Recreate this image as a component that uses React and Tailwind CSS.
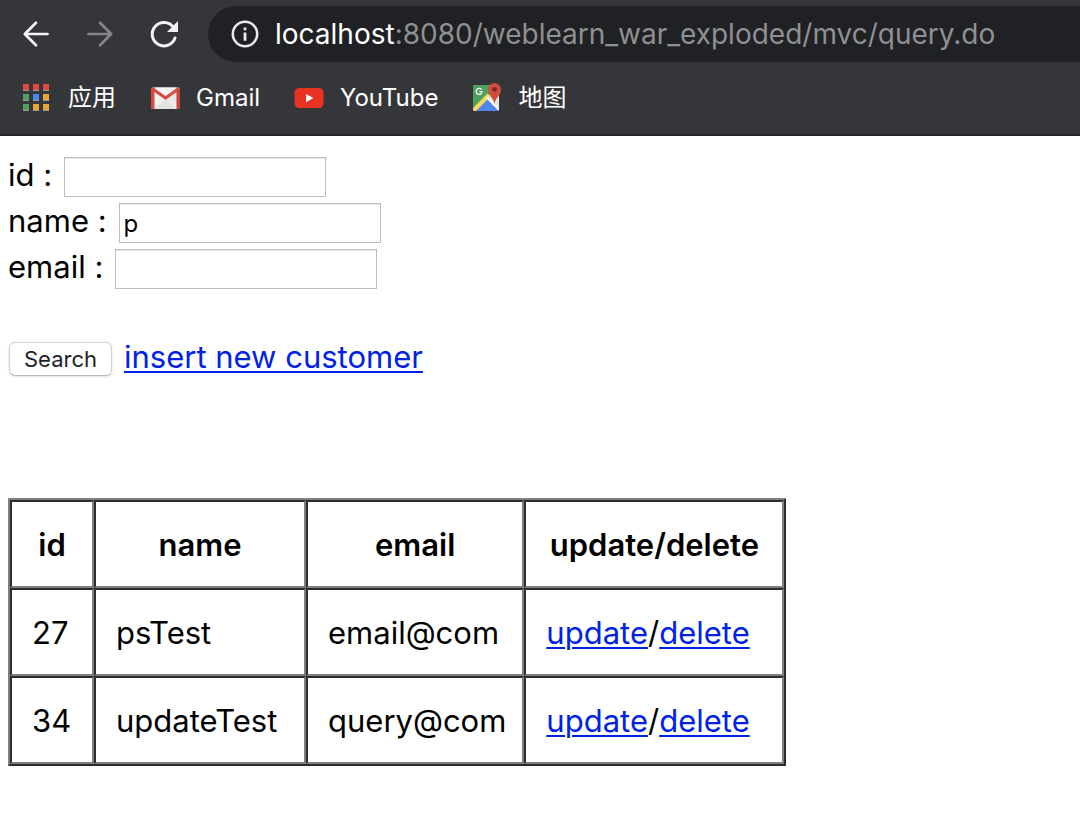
const customers = [
  { id: 27, name: 'psTest', email: 'email@com' },
  { id: 34, name: 'updateTest', email: 'query@com' },
];

const cell =
  'h-22 border-2 border-t-[#2c2c2c] border-l-[#2c2c2c] border-r-[#808080] border-b-[#808080] pt-0.5';
const link = 'text-[#0022e6] underline decoration-2 underline-offset-[3px]';

function BackIcon() {
  return (
    <svg className="size-8" viewBox="0 0 32 32" fill="none" stroke="currentColor" strokeWidth="2.7" strokeLinecap="round" strokeLinejoin="round" aria-hidden="true">
      <path d="M27.5 16H5M16 4.8L4.8 16L16 27.2" />
    </svg>
  );
}

function ForwardIcon() {
  return (
    <svg className="size-8" viewBox="0 0 32 32" fill="none" stroke="currentColor" strokeWidth="2.7" strokeLinecap="round" strokeLinejoin="round" aria-hidden="true">
      <path d="M4.5 16H27M16 4.8L27.2 16L16 27.2" />
    </svg>
  );
}

function ReloadIcon() {
  return (
    <svg className="size-8" viewBox="0 0 32 32" aria-hidden="true">
      <path d="M27 20A11.7 11.7 0 1 1 25.2 9" fill="none" stroke="currentColor" strokeWidth="3" strokeLinecap="round" />
      <path d="M30 3V14H19Z" fill="currentColor" />
    </svg>
  );
}

function InfoIcon() {
  return (
    <svg className="size-7 shrink-0" viewBox="0 0 28 28" aria-hidden="true">
      <circle cx="14" cy="14" r="12.2" fill="none" stroke="#e8eaed" strokeWidth="2.5" />
      <path d="M12.6 7.5h2.8v2.8h-2.8zM12.6 12.5h2.8v8.2h-2.8z" fill="#e8eaed" />
    </svg>
  );
}

function AppsIcon() {
  const colors = ['#e2483d', '#e2483d', '#e2483d', '#549e5f', '#468af0', '#e6a439', '#549e5f', '#e6a439', '#e6a439'];
  return (
    <svg className="h-7 w-[30px]" viewBox="0 0 30 28" aria-hidden="true">
      {colors.map((color, i) => {
        const x = 1 + (i % 3) * 10;
        const y = Math.floor(i / 3) * 10;
        return (
          <g key={i}>
            <rect x={x} y={y + 1} width="6" height="6" fill="#9a9a98" />
            <rect x={x} y={y} width="6" height="6" fill={color} />
          </g>
        );
      })}
    </svg>
  );
}

function GmailIcon() {
  return (
    <svg className="h-6 w-8" viewBox="0 0 32 24" aria-hidden="true">
      <rect x="3" y="1.5" width="29" height="21.5" rx="2" fill="#f1f1f0" />
      <path d="M6.5 23L17.5 12L28.5 23Z" fill="#e2e2e1" />
      <path d="M17.5 14L29.5 3V17Z" fill="#e6e6e5" />
      <path d="M7 1.5H28L17.5 10Z" fill="#f5f5f5" />
      <path d="M3 3.5Q3 1.5 5 1.5L6.5 2.5V23H4.7Q3 23 3 21.3Z" fill="#d54b3d" />
      <path d="M32 3.5Q32 1.5 30 1.5L28.5 2.5V23H30.3Q32 23 32 21.3Z" fill="#c94436" />
      <path d="M4.8 3L17.5 12L30.2 3" fill="none" stroke="#d54b3d" strokeWidth="3" strokeLinejoin="round" />
    </svg>
  );
}

function YouTubeIcon() {
  return (
    <svg className="h-6 w-8" viewBox="0 0 32 24" aria-hidden="true">
      <rect x="2.5" y="2" width="29" height="20" rx="4.5" fill="#ea3223" />
      <path d="M14 8L21.4 12L14 16.2Z" fill="#fff" />
    </svg>
  );
}

function MapsIcon() {
  return (
    <svg className="size-8" viewBox="0 2 32 32" aria-hidden="true">
      <clipPath id="map-sheet">
        <rect x="3" y="5" width="26" height="26" rx="2" />
      </clipPath>
      <g clipPath="url(#map-sheet)">
        <rect x="3" y="5" width="26" height="26" fill="#e4e3e3" />
        <path d="M3 5H29L3 31Z" fill="#4f9f5d" />
        <path d="M3 31L16 18L29 31Z" fill="#4e86ec" />
        <path d="M3 31L19 15" stroke="#f6d75b" strokeWidth="4.2" />
        <path d="M17 17L30 30" stroke="#f4f4f4" strokeWidth="3" />
      </g>
      <path d="M11.5 9.6A3 3 0 1 0 12.1 11.6H9.3" fill="none" stroke="#fff" strokeWidth="1.2" />
      <path d="M24.5 24.5C23.8 17.5 18 15.5 18 9.5A6.5 6.5 0 0 1 31 9.5C31 15.5 25.2 17.5 24.5 24.5Z" fill="#d44c3e" />
      <circle cx="24.5" cy="9.3" r="2.4" fill="#782c26" />
    </svg>
  );
}

function Bookmark({ icon, children }) {
  return (
    <a href="#" className="flex items-center gap-4">
      {icon}
      <span>{children}</span>
    </a>
  );
}

function Field({ name, defaultValue }) {
  return (
    <div className="flex h-[46px] items-center gap-3">
      <label htmlFor={name} className="-mt-1 whitespace-pre">
        {name} :
      </label>
      <input
        id={name}
        name={name}
        type="text"
        defaultValue={defaultValue}
        className="h-10 w-[262px] border border-[#bdbdbd] bg-white px-1 text-2xl shadow-[inset_0_1px_0_#e8e8e8] outline-none"
      />
    </div>
  );
}

export default function App() {
  return (
    <div className="min-h-screen bg-white font-['Inter','Noto_Sans_CJK_SC',sans-serif] text-black">
      <header className="overflow-hidden border-b-2 border-[#28282a] bg-[#35363a] text-white">
        <div className="flex items-center pt-1.5 pl-5">
          <nav className="flex gap-8 pr-7" aria-label="History">
            <button type="button" aria-label="Back" className="text-[#f1f3f4]"><BackIcon /></button>
            <button type="button" aria-label="Forward" className="text-[#868789]"><ForwardIcon /></button>
            <button type="button" aria-label="Reload" className="text-[#f1f3f4]"><ReloadIcon /></button>
          </nav>
          <div className="flex h-14 flex-1 items-center gap-4 rounded-l-full bg-[#202124] pl-[23px] text-[28px] whitespace-nowrap">
            <InfoIcon />
            <p className="text-[#8f9092]">
              <span className="text-white">localhost</span>:8080/weblearn_war_exploded/mvc/query.do
            </p>
          </div>
        </div>
        <nav className="flex h-18 items-center gap-8 pl-[22px] text-2xl" aria-label="Bookmarks">
          <Bookmark icon={<AppsIcon />}>应用</Bookmark>
          <Bookmark icon={<GmailIcon />}>Gmail</Bookmark>
          <Bookmark icon={<YouTubeIcon />}>YouTube</Bookmark>
          <Bookmark icon={<MapsIcon />}>地图</Bookmark>
        </nav>
      </header>

      <main className="px-2 pt-[18px] pb-12 text-[31px]">
        <form onSubmit={(e) => e.preventDefault()}>
          <Field name="id" />
          <Field name="name" defaultValue="p" />
          <Field name="email" />
          <div className="mt-[42px] flex h-[46px] items-center gap-3 pl-px">
            <button type="submit" className="mt-1 h-[34px] rounded-md border border-[#d0d0d0] border-b-[#b8b8b8] bg-white px-3.5 text-[22px] leading-none text-[#222] shadow-sm">
              Search
            </button>
            <a href="#" className={link}>insert new customer</a>
          </div>
        </form>

        <table className="mt-[118px] border-separate border-spacing-0 border-2 border-t-[#808080] border-l-[#808080] border-r-[#2c2c2c] border-b-[#2c2c2c]">
          <colgroup>
            <col className="w-[84px]" />
            <col className="w-[212px]" />
            <col className="w-[218px]" />
            <col className="w-[260px]" />
          </colgroup>
          <thead>
            <tr>
              {['id', 'name', 'email', 'update/delete'].map((title) => (
                <th key={title} className={`${cell} px-4 font-semibold`}>{title}</th>
              ))}
            </tr>
          </thead>
          <tbody>
            {customers.map((c) => (
              <tr key={c.id}>
                <td className={`${cell} pr-4 pl-5`}>{c.id}</td>
                <td className={`${cell} pr-4 pl-5`}>{c.name}</td>
                <td className={`${cell} pr-4 pl-5`}>{c.email}</td>
                <td className={`${cell} pr-4 pl-5`}>
                  <a href="#" className={link}>update</a>/<a href="#" className={link}>delete</a>
                </td>
              </tr>
            ))}
          </tbody>
        </table>
      </main>
    </div>
  );
}
